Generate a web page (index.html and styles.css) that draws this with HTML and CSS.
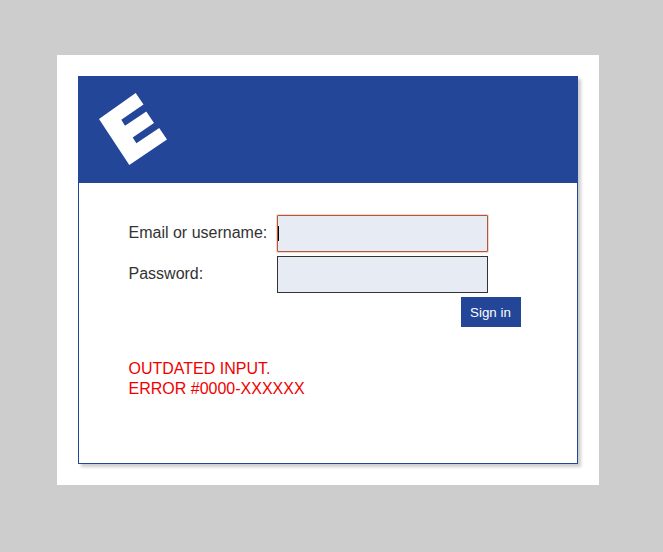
FILE: index.html
```html
<!DOCTYPE html>
<html lang="en">
<head>
<meta charset="utf-8">
<title>Sign in</title>
<link rel="stylesheet" href="styles.css">
</head>
<body>
<main class="page">
  <section class="card">
    <header class="banner">
      <svg class="logo" viewBox="0 0 70 74" aria-hidden="true">
        <path fill="#fff" d="M37.7 1 45.5 12.6 23.3 27.7 27 33.7 48.3 19.4 56 31 34.7 45.6 38.4 51.2 61.2 36 69 47.5 31.3 73 1 27Z"/>
      </svg>
    </header>
    <form class="form">
      <div class="row">
        <label class="label" for="user">Email or username:</label>
        <div class="field focused"><span class="caret"></span><input class="input" id="user" type="text"></div>
      </div>
      <div class="row">
        <label class="label" for="pass">Password:</label>
        <div class="field"><input class="input" id="pass" type="password"></div>
      </div>
      <button class="submit" type="button">Sign in</button>
      <p class="error">OUTDATED INPUT.<br>ERROR #0000-XXXXXX</p>
    </form>
  </section>
</main>
</body>
</html>
```
FILE: styles.css
```css
* {
  box-sizing: border-box;
}

body {
  margin: 0;
  min-height: 552px;
  padding: 55px 64px 67px 57px;
  background: #cdcdcd;
  color: #333;
  font: 16px/20px "Liberation Sans", Arial, sans-serif;
}

.page {
  height: 430px;
  padding: 21px;
  background: #fff;
}

.card {
  height: 388px;
  border: 1px solid #234699;
  background: #fff;
  box-shadow: 3px 3px 3px rgba(0, 0, 0, 0.2);
}

.banner {
  height: 106px;
  padding: 15px 19px;
  background: #234699;
}

.logo {
  display: block;
  width: 70px;
  height: 74px;
}

.form {
  display: flex;
  flex-direction: column;
  padding: 32px 56px 0 49.5px;
}

.row {
  display: flex;
  margin-bottom: 4px;
}

.label {
  width: 148.5px;
  padding-top: 8px;
}

.field {
  display: flex;
  width: 211px;
  height: 37px;
  border: 1px solid #333;
  background: #e7ebf4;
}

.focused {
  border-color: #ad5840;
  border-radius: 1px;
  box-shadow: 0 0 0 1px rgba(240, 170, 135, 0.5);
}

.caret {
  width: 1px;
  height: 15px;
  margin-top: 10px;
  background: #000;
}

.input {
  flex: 1;
  min-width: 0;
  padding: 0;
  border: 0;
  outline: 0;
  background: transparent;
  font: inherit;
}

.submit {
  align-self: flex-end;
  width: 60px;
  height: 30px;
  padding: 1px 1px 0 0;
  border: 0;
  background: #234699;
  color: #fff;
  font: 13.33px "Liberation Sans", Arial, sans-serif;
}

.error {
  margin: 32px 0 0;
  color: #f00000;
}
```
